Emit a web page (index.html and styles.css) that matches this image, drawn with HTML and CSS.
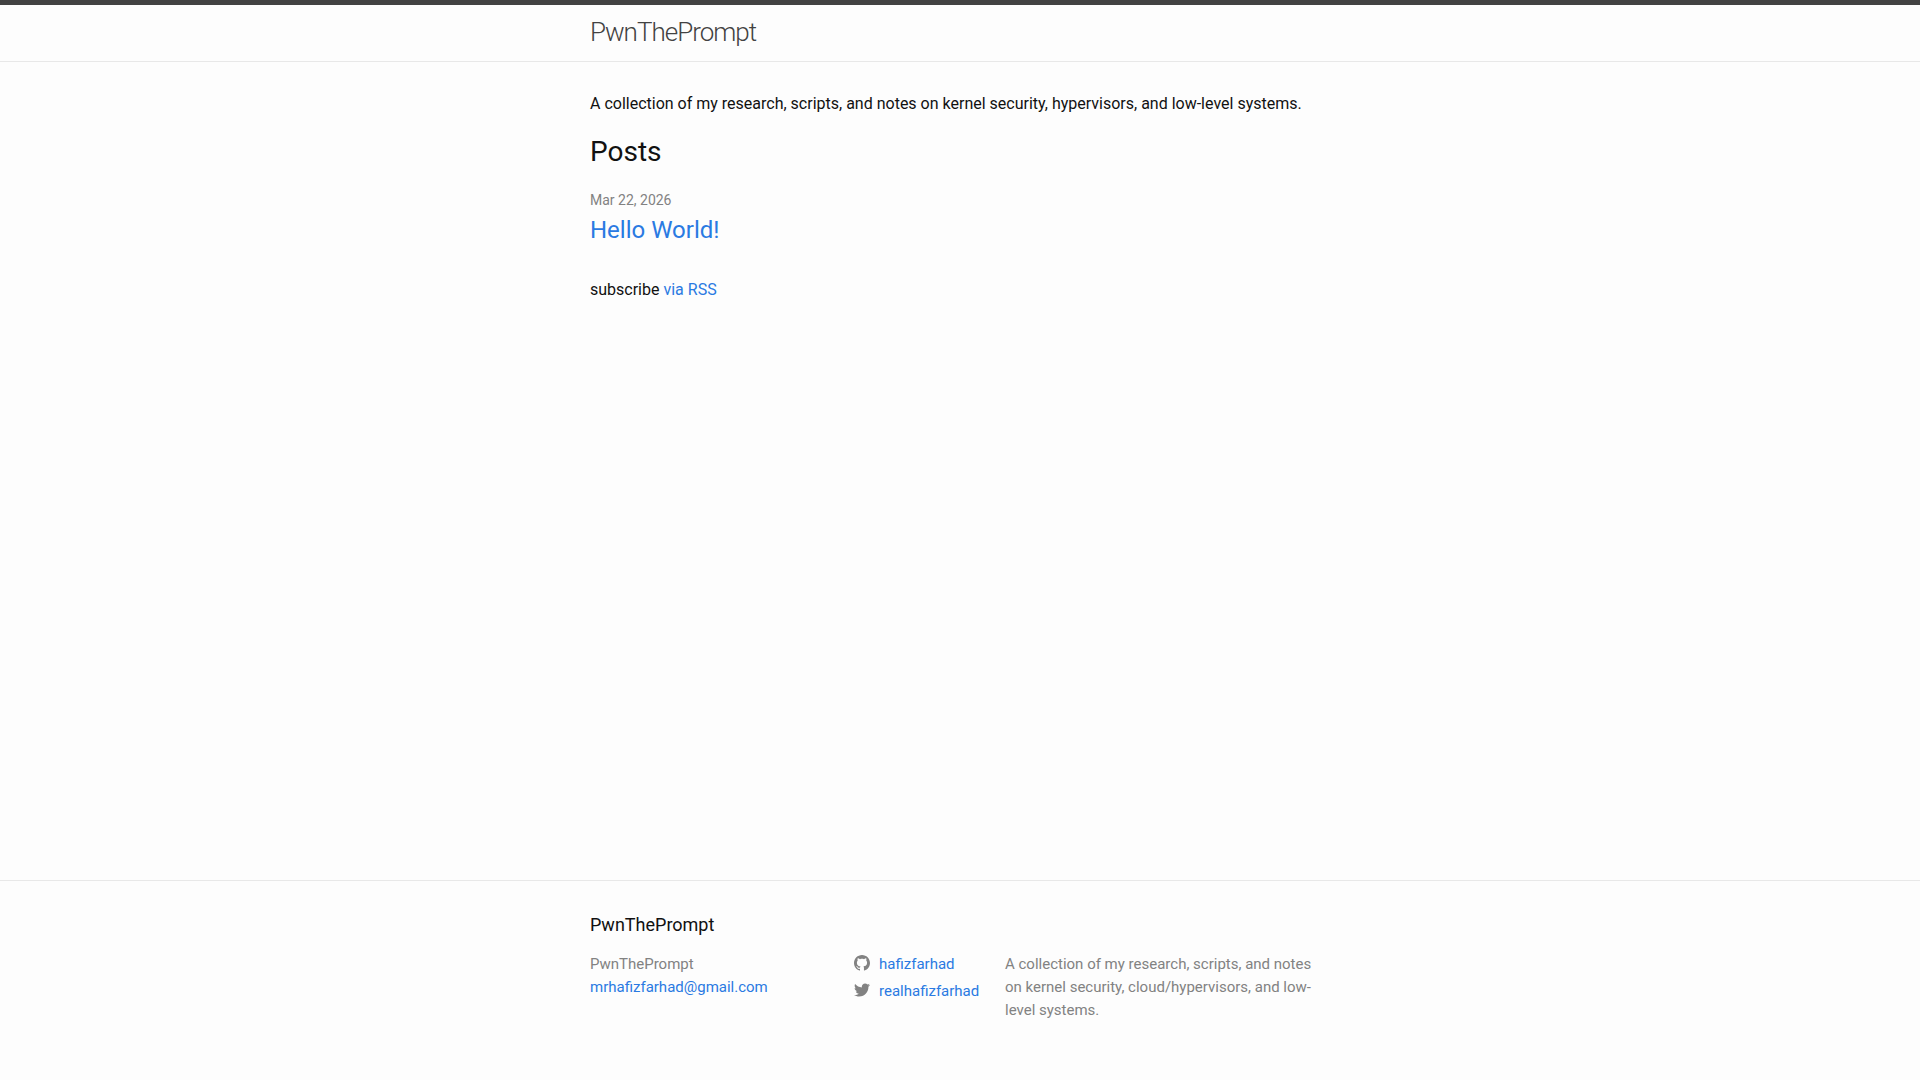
FILE: index.html
```html
<!DOCTYPE html>
<html lang="en">
<head>
<meta charset="utf-8">
<meta name="viewport" content="width=device-width, initial-scale=1">
<title>PwnThePrompt</title>
<link rel="stylesheet" href="styles.css">
</head>
<body>
<header class="site-header">
  <div class="wrapper">
    <a class="site-title" href="/">PwnThePrompt</a>
  </div>
</header>
<main class="page-content">
  <div class="wrapper">
    <p class="intro">A collection of my research, scripts, and notes on kernel security, hypervisors, and low-level systems.</p>
    <h2 class="post-list-heading">Posts</h2>
    <ul class="post-list">
      <li>
        <span class="post-meta">Mar 22, 2026</span>
        <h3 class="post-title"><a href="/hello-world">Hello World!</a></h3>
      </li>
    </ul>
    <p class="rss-subscribe">subscribe <a href="/feed.xml">via RSS</a></p>
  </div>
</main>
<footer class="site-footer">
  <div class="wrapper">
    <h2 class="footer-heading">PwnThePrompt</h2>
    <div class="footer-columns">
      <ul class="contact-list">
        <li>PwnThePrompt</li>
        <li><a href="mailto:mrhafizfarhad@gmail.com">mrhafizfarhad@gmail.com</a></li>
      </ul>
      <ul class="social-list">
        <li><a href="https://github.com/hafizfarhad"><svg class="icon" viewBox="0 0 16 16" aria-hidden="true"><path d="M8 0C3.58 0 0 3.582 0 8c0 3.535 2.292 6.533 5.47 7.59.4.075.547-.172.547-.385 0-.19-.007-.693-.01-1.36-2.226.483-2.695-1.073-2.695-1.073-.364-.924-.89-1.17-.89-1.17-.725-.496.056-.486.056-.486.803.056 1.225.824 1.225.824.714 1.223 1.873.87 2.33.665.072-.517.278-.87.507-1.07-1.777-.2-3.644-.888-3.644-3.953 0-.873.31-1.587.823-2.147-.09-.202-.36-1.015.07-2.117 0 0 .67-.215 2.2.82.64-.178 1.32-.266 2-.27.68.004 1.36.092 2 .27 1.52-1.035 2.19-.82 2.19-.82.43 1.102.16 1.915.08 2.117.51.56.82 1.274.82 2.147 0 3.073-1.87 3.75-3.65 3.947.28.24.54.73.54 1.48 0 1.07-.01 1.93-.01 2.19 0 .21.14.46.55.38C13.71 14.53 16 11.53 16 8c0-4.418-3.582-8-8-8"/></svg><span>hafizfarhad</span></a></li>
        <li><a href="https://twitter.com/realhafizfarhad"><svg class="icon" viewBox="0 0 16 16" aria-hidden="true"><path d="M16 3.038c-.59.26-1.22.437-1.885.517.677-.407 1.198-1.05 1.443-1.816-.634.37-1.337.64-2.085.79-.598-.64-1.45-1.04-2.396-1.04-1.812 0-3.282 1.47-3.282 3.28 0 .26.03.51.085.75-2.728-.13-5.147-1.44-6.766-3.42C.83 2.58.67 3.14.67 3.75c0 1.14.58 2.143 1.46 2.732-.538-.017-1.045-.165-1.487-.41v.04c0 1.59 1.13 2.918 2.633 3.22-.276.074-.566.114-.865.114-.21 0-.41-.02-.61-.058.42 1.304 1.63 2.253 3.07 2.28-1.12.88-2.54 1.404-4.07 1.404-.26 0-.52-.015-.78-.045 1.46.93 3.18 1.474 5.04 1.474 6.04 0 9.34-5 9.34-9.33 0-.14 0-.28-.01-.42.64-.46 1.2-1.04 1.64-1.7z"/></svg><span>realhafizfarhad</span></a></li>
      </ul>
      <p class="description">A collection of my research, scripts, and notes on kernel security, cloud/hypervisors, and low-level systems.</p>
    </div>
  </div>
</footer>
</body>
</html>
```
FILE: styles.css
```css
* {
  box-sizing: border-box;
}

body {
  display: flex;
  flex-direction: column;
  min-height: 100vh;
  margin: 0;
  color: #111;
  background: #fdfdfd;
  font: 400 16px/24px Roboto, "Liberation Sans", sans-serif;
}

h2,
h3,
p,
ul {
  margin: 0;
  padding: 0;
  font-weight: 400;
}

ul {
  list-style: none;
}

a {
  color: #2a7ae2;
  text-decoration: none;
}

a:hover {
  text-decoration: underline;
}

.wrapper {
  max-width: 800px;
  margin: 0 auto;
  padding: 0 30px;
}

.site-header {
  min-height: 62px;
  border-top: 5px solid #424242;
  border-bottom: 1px solid #e8e8e8;
}

.site-title {
  display: block;
  color: #424242;
  font-size: 26px;
  font-weight: 300;
  line-height: 54px;
  letter-spacing: -1px;
}

.page-content {
  flex: 1;
  padding: 30px 0;
}

.post-list-heading {
  margin: 15px 0;
  font-size: 28px;
  line-height: 42px;
}

.post-meta {
  color: #828282;
  font-size: 14px;
}

.post-title {
  margin-bottom: 30px;
  font-size: 24px;
  line-height: 36px;
}

.site-footer {
  padding: 30px 0;
  border-top: 1px solid #e8e8e8;
}

.footer-heading {
  margin-bottom: 15px;
  font-size: 18px;
  line-height: 27px;
}

.footer-columns {
  display: grid;
  grid-template-columns: 264px 151px 1fr;
  color: #828282;
  font-size: 15px;
  line-height: 23px;
}

.social-list a {
  display: flex;
  gap: 9px;
  margin-bottom: 4px;
}

.icon {
  width: 16px;
  height: 16px;
  margin-top: 2px;
  fill: #828282;
}

.description {
  padding-bottom: 28px;
}

@media (max-width: 700px) {
  .footer-columns {
    grid-template-columns: 1fr;
    gap: 15px;
  }
}
```
